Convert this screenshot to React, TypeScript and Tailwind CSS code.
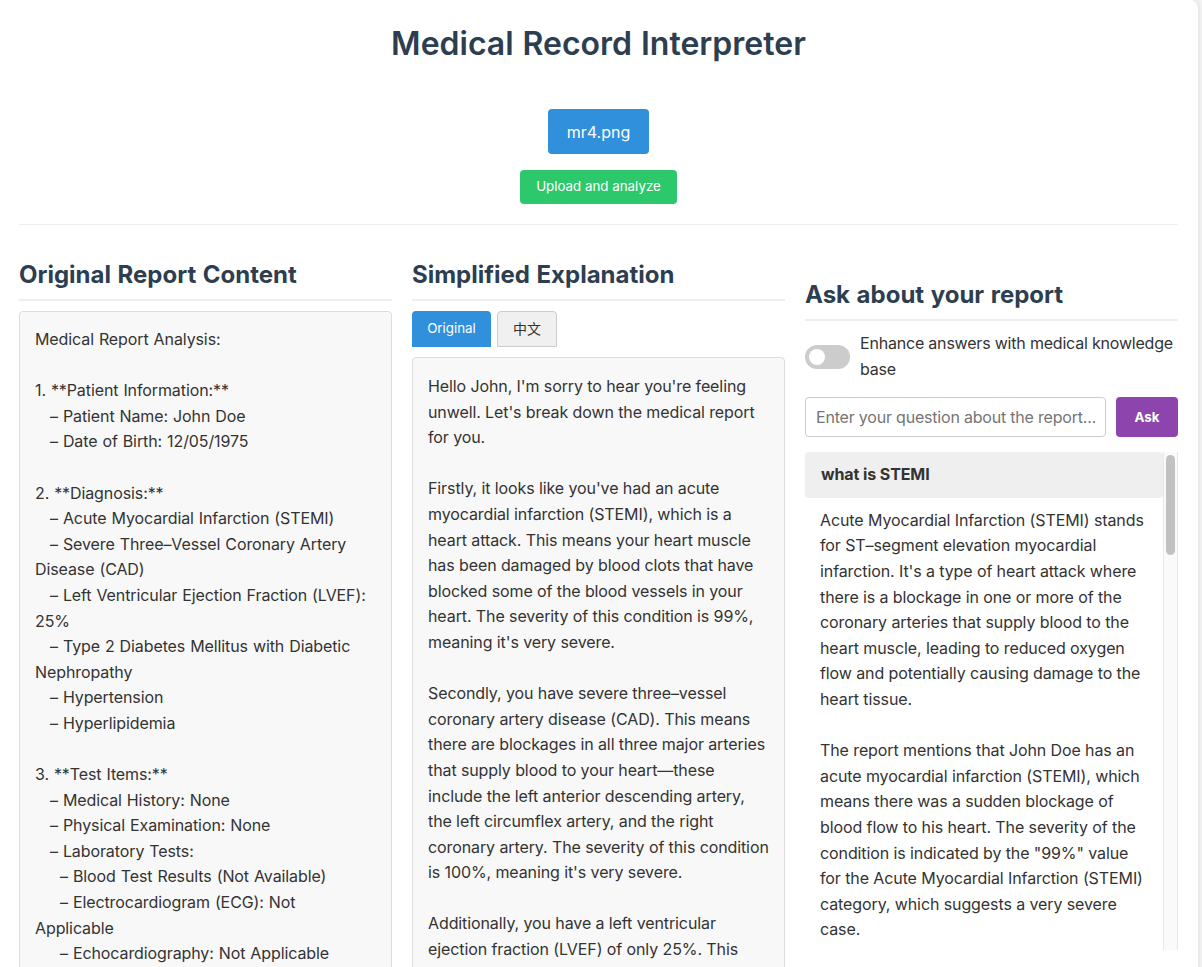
import React from "react";

const report = `Medical Report Analysis:

1. **Patient Information:**
   – Patient Name: John Doe
   – Date of Birth: 12/05/1975

2. **Diagnosis:**
   – Acute Myocardial Infarction (STEMI)
   – Severe Three–Vessel Coronary Artery Disease (CAD)
   – Left Ventricular Ejection Fraction (LVEF): 25%
   – Type 2 Diabetes Mellitus with Diabetic Nephropathy
   – Hypertension
   – Hyperlipidemia

3. **Test Items:**
   – Medical History: None
   – Physical Examination: None
   – Laboratory Tests:
     – Blood Test Results (Not Available)
     – Electrocardiogram (ECG): Not Applicable
     – Echocardiography: Not Applicable
     – Coronary Angiography: Not Applicable
   – Imaging Studies: None

4. **Treatment:**
   – Not Available`;

const explanation = `Hello John, I'm sorry to hear you're feeling unwell. Let's break down the medical report for you.

Firstly, it looks like you've had an acute myocardial infarction (STEMI), which is a heart attack. This means your heart muscle has been damaged by blood clots that have blocked some of the blood vessels in your heart. The severity of this condition is 99%, meaning it's very severe.

Secondly, you have severe three–vessel coronary artery disease (CAD). This means there are blockages in all three major arteries that supply blood to your heart—these include the left anterior descending artery, the left circumflex artery, and the right coronary artery. The severity of this condition is 100%, meaning it's very severe.

Additionally, you have a left ventricular ejection fraction (LVEF) of only 25%. This means your heart is not pumping blood as well as it should.`;

const chat: { q: string; a: string }[] = [
  {
    q: "what is STEMI",
    a: `Acute Myocardial Infarction (STEMI) stands for ST–segment elevation myocardial infarction. It's a type of heart attack where there is a blockage in one or more of the coronary arteries that supply blood to the heart muscle, leading to reduced oxygen flow and potentially causing damage to the heart tissue.

The report mentions that John Doe has an acute myocardial infarction (STEMI), which means there was a sudden blockage of blood flow to his heart. The severity of the condition is indicated by the "99%" value for the Acute Myocardial Infarction (STEMI) category, which suggests a very severe case.`,
  },
];

function SectionTitle({ children, extra = "" }: { children: React.ReactNode; extra?: string }) {
  return (
    <h2
      className={`text-[24px] leading-[29px] font-bold text-[#2c3e50] tracking-normal [word-spacing:0.9px] pb-[10px] border-b-2 border-[#eee] mb-[10px] ${extra}`}
    >
      {children}
    </h2>
  );
}

export default function App() {
  return (
    <div className="min-h-screen bg-[#f3f3f3] text-[#333] [font-family:Inter,'Noto_Sans_CJK_SC',sans-serif]">
      <div className="w-[1198px] bg-white rounded-r-[8px] shadow-[0_0_5px_rgba(0,0,0,0.12)] pt-[25px] pl-[19px] pr-[20px] pb-[20px]">
        <h1 className="text-center text-[32px] leading-[38px] font-semibold text-[#2c3e50] [word-spacing:0.9px]">
          Medical Record Interpreter
        </h1>

        <div className="mt-[46px] pb-[20px] border-b border-[#eee] flex flex-col items-center">
          <button className="w-[101px] h-[45px] rounded-[4px] bg-[#3090dc] text-white text-[16px]">
            mr4.png
          </button>
          <button className="mt-[16px] w-[157px] h-[34px] rounded-[4px] bg-[#2dc86c] text-white text-[13.33px]">
            Upload and analyze
          </button>
        </div>

        <div className="grid grid-cols-3 gap-x-[20px] mt-[35px] text-[16px] leading-[1.6] tracking-[-0.1px]">
          <section className="min-w-0">
            <SectionTitle>Original Report Content</SectionTitle>
            <div className="bg-[#f8f8f8] border border-[#ddd] rounded-[4px] p-[15px] whitespace-pre-wrap [word-spacing:0.6px]">
              {report}
            </div>
          </section>

          <section className="min-w-0">
            <SectionTitle>Simplified Explanation</SectionTitle>
            <div className="flex gap-[6px] mt-[1px] mb-[10px]">
              <button className="w-[79px] h-[36px] rounded-t-[4px] bg-[#3090dc] text-white text-[13.33px] tracking-normal">
                Original
              </button>
              <button className="w-[60px] h-[36px] rounded-t-[4px] bg-[#f0f0f0] border border-[#ccc] text-[#333] text-[14px] tracking-normal">
                中文
              </button>
            </div>
            <div className="bg-[#f8f8f8] border border-[#ddd] rounded-[4px] p-[15px] pt-[16px] whitespace-pre-wrap">
              {explanation}
            </div>
          </section>

          <section className="min-w-0">
            <SectionTitle extra="mt-[20px]">Ask about your report</SectionTitle>
            <div className="flex items-center gap-[10px]">
              <div className="w-[45px] h-[24px] rounded-full bg-[#ccc] flex items-center pl-[4px] shrink-0">
                <div className="w-[16px] h-[16px] rounded-full bg-white" />
              </div>
              <span className="tracking-[-0.2px]">Enhance answers with medical knowledge base</span>
            </div>
            <div className="mt-[15px] flex gap-[10px]">
              <input
                className="flex-1 min-w-0 h-[40px] border border-[#ccc] rounded-[4px] px-[10px] text-[16px] tracking-[-0.2px] outline-none placeholder:text-[#757575]"
                placeholder="Enter your question about the report..."
              />
              <button className="w-[62px] h-[40px] rounded-[4px] bg-[#8e44ad] text-white text-[13.33px] font-bold tracking-normal">
                Ask
              </button>
            </div>
            <div className="mt-[15px] h-[498px] flex overflow-hidden">
              <div className="flex-1 min-w-0 overflow-hidden">
                {chat.map((m, i) => (
                  <div key={i} className="mb-[10px]">
                    <div className="bg-[#efefef] rounded-[4px] px-[16px] py-[10px] font-bold">{m.q}</div>
                    <div className="px-[15px] py-[10px] whitespace-pre-wrap">{m.a}</div>
                  </div>
                ))}
              </div>
              <div className="w-[15px] shrink-0 bg-[#fafafa] border-l border-r border-[#e8e8e8] pt-[3px] px-[2px]">
                <div className="h-[100px] rounded-full bg-[#c1c1c1]" />
              </div>
            </div>
          </section>
        </div>
      </div>
    </div>
  );
}
